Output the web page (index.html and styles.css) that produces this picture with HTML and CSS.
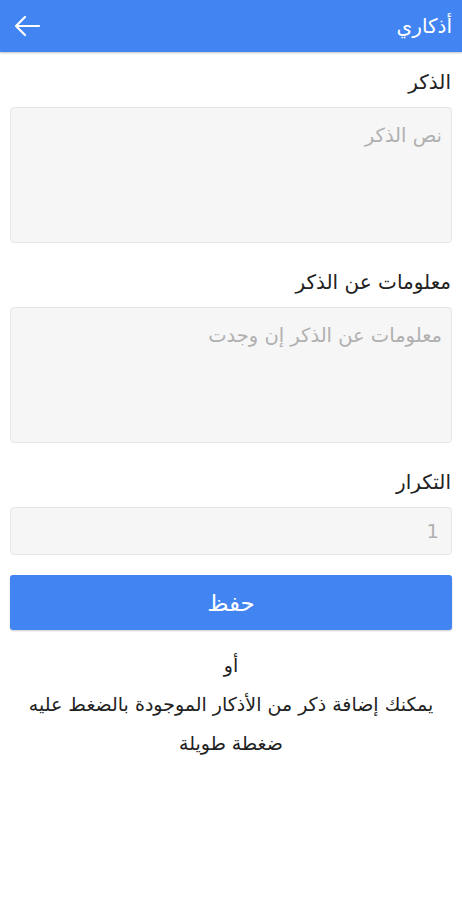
FILE: index.html
```html
<!DOCTYPE html>
<html lang="ar" dir="rtl">
<head>
<meta charset="utf-8">
<link rel="stylesheet" href="styles.css">
</head>
<body>
<header class="appbar">
  <span class="title">أذكاري</span>
  <svg class="back" width="28" height="22" viewBox="0 0 28 22"><path d="M26 11H3M12 2L3 11l9 9" fill="none" stroke="#fff" stroke-width="2.2" stroke-linecap="round" stroke-linejoin="round"/></svg>
</header>
<main class="form">
  <label class="label">الذكر</label>
  <div class="field area"><span class="ph">نص الذكر</span></div>
  <label class="label">معلومات عن الذكر</label>
  <div class="field area"><span class="ph">معلومات عن الذكر إن وجدت</span></div>
  <label class="label">التكرار</label>
  <div class="field single"><span class="ph">1</span></div>
  <button class="save">حفظ</button>
  <p class="note">أو<br>يمكنك إضافة ذكر من الأذكار الموجودة بالضغط عليه<br>ضغطة طويلة</p>
</main>
</body>
</html>
```
FILE: styles.css
```css
* { box-sizing: border-box; }
html, body { margin: 0; padding: 0; background: #fff; }
body { font-family: "DejaVu Sans", sans-serif; color: #222; }
.appbar {
  height: 52px;
  background: #4285f2;
  display: flex;
  align-items: center;
  justify-content: space-between;
  padding: 0 10px 0 13px;
  box-shadow: 0 1px 2px rgba(0,0,0,0.25);
}
.title { color: #fff; font-size: 20px; }
.back { display: block; }
.form { padding: 18px 10px 0 10px; display: flex; flex-direction: column; }
.label { font-size: 20px; color: #222; line-height: 24px; padding-right: 1px; }
.field {
  background: #f6f6f6;
  border: 1px solid #e6e6e6;
  border-radius: 4px;
  color: #b0b0b0;
  font-size: 19.5px;
}
.area { height: 136px; margin-top: 13px; margin-bottom: 27px; padding: 15px 9px; line-height: 26px; }
.single { height: 48px; margin-top: 13px; padding: 11px 12px; line-height: 26px; }
.save {
  margin-top: 20px;
  height: 55px;
  border: none;
  border-radius: 3px;
  background: #4285f2;
  color: #fff;
  font-family: "DejaVu Sans", sans-serif;
  font-size: 23px;
  box-shadow: 0 1px 2px rgba(0,0,0,0.2);
}
.note { margin: 16px 0 0; text-align: center; font-size: 19px; line-height: 39px; color: #222; }
```
